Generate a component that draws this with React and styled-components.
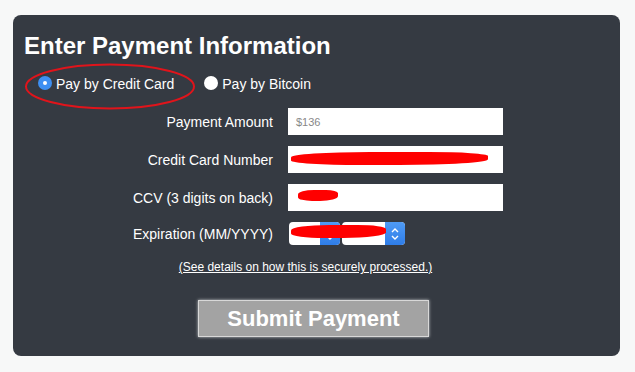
import React from "react"
import styled, { createGlobalStyle } from "styled-components"

const Global = createGlobalStyle`
  body {
    margin: 0;
    background: #f7f8f8;
    font-family: "Liberation Sans", Arial, sans-serif;
  }
`

const Panel = styled.div`
  position: relative;
  box-sizing: border-box;
  margin: 15px 0 0 13px;
  width: 607px;
  height: 341px;
  background: #353a42;
  border-radius: 8px;
  padding: 17px 11px 0 11px;
  color: #fff;
`

const Heading = styled.h1`
  margin: 0;
  font-size: 24px;
  line-height: 28px;
  font-weight: bold;
`

const Methods = styled.div`
  display: flex;
  align-items: center;
  gap: 30px;
  margin: 14px 0 0 14px;
  height: 20px;
`

const Method = styled.label`
  display: flex;
  align-items: center;
  gap: 4px;
  font-size: 14px;
`

const Radio = styled.span`
  width: 14px;
  height: 14px;
  border-radius: 50%;
  box-sizing: border-box;
  background: ${p => (p.checked ? "#3d8ff2" : "#fff")};
  display: flex;
  align-items: center;
  justify-content: center;
  margin-top: -3px;
  &::after {
    content: "";
    width: 4px;
    height: 4px;
    border-radius: 50%;
    background: ${p => (p.checked ? "#fff" : "transparent")};
  }
`

const Ellipse = styled.svg`
  position: absolute;
  left: 10px;
  top: 47px;
  pointer-events: none;
`

const Form = styled.div`
  display: grid;
  grid-template-columns: 249px 215px;
  column-gap: 15px;
  row-gap: 11px;
  margin-top: 14px;
  align-items: center;
`

const Label = styled.div`
  text-align: right;
  font-size: 14px;
`

const Field = styled.div`
  position: relative;
  height: 27px;
  background: #fff;
  display: flex;
  align-items: center;
  padding-left: 8px;
  font-size: 11px;
  color: #888;
`

const Scribble = styled.span`
  position: absolute;
  left: ${p => p.left}px;
  top: ${p => p.top}px;
  width: ${p => p.w}px;
  height: ${p => p.h}px;
  background: #ff0000;
  border-radius: 40% 30% 45% 35%;
  filter: blur(0.4px);
`

const Selects = styled.div`
  position: relative;
  display: flex;
  gap: 2px;
  height: 23px;
  margin-left: 1px;
`

const Select = styled.div`
  width: ${p => p.w}px;
  background: #fff;
  border-radius: 4px;
  display: flex;
  justify-content: flex-end;
`

const Arrow = styled.div`
  width: 20px;
  border-radius: 0 4px 4px 0;
  background: linear-gradient(#4f9bf5, #2f7de8);
  display: flex;
  align-items: center;
  justify-content: center;
`

const Note = styled.a`
  display: block;
  text-align: center;
  margin: 15px 0 0 0;
  font-size: 12px;
  color: #fff;
  text-decoration: underline;
  padding-right: 22px;
`

const Submit = styled.button`
  display: block;
  margin: 26px 0 0 174px;
  width: 231px;
  height: 37px;
  background: #a3a3a3;
  border: 1px solid #d8d8d8;
  box-shadow: 0 0 3px rgba(255, 255, 255, 0.7);
  color: #fff;
  font-family: "Liberation Sans", Arial, sans-serif;
  font-size: 22px;
  font-weight: bold;
  padding: 0;
`

function Chevrons() {
  return (
    <svg width="8" height="14" viewBox="0 0 8 14">
      <path d="M1 5 L4 2 L7 5 M1 9 L4 12 L7 9" stroke="#fff" strokeWidth="1.4" fill="none" />
    </svg>
  )
}

export default function App() {
  return (
    <>
      <Global />
      <Panel>
        <Heading>Enter Payment Information</Heading>
        <Methods>
          <Method><Radio checked />Pay by Credit Card</Method>
          <Method><Radio />Pay by Bitcoin</Method>
        </Methods>
        <Ellipse width="175" height="50" viewBox="0 0 175 50">
          <ellipse cx="87" cy="24.5" rx="84" ry="22" stroke="#e0141b" strokeWidth="2" fill="none" />
        </Ellipse>
        <Form>
          <Label>Payment Amount</Label>
          <Field>$136</Field>
          <Label>Credit Card Number</Label>
          <Field><Scribble left={3} top={6} w={197} h={13} /></Field>
          <Label>CCV (3 digits on back)</Label>
          <Field><Scribble left={10} top={6} w={40} h={11} /></Field>
          <Label>Expiration (MM/YYYY)</Label>
          <Selects>
            <Select w={51}><Arrow><Chevrons /></Arrow></Select>
            <Select w={63}><Arrow><Chevrons /></Arrow></Select>
            <Scribble left={2} top={3} w={95} h={13} />
          </Selects>
        </Form>
        <Note href="#">(See details on how this is securely processed.)</Note>
        <Submit>Submit Payment</Submit>
      </Panel>
    </>
  )
}
